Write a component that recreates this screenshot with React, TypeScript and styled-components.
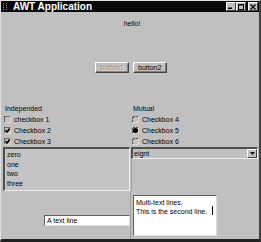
import React from "react";
import styled, { createGlobalStyle } from "styled-components";

const GlobalStyle = createGlobalStyle`
  html, body { margin: 0; padding: 0; background: #c0c0c0; }
  body { font-family: "Liberation Sans", Arial, sans-serif; }
`;

const Frame = styled.div`
  width: 261px;
  height: 242px;
  box-sizing: border-box;
  background: #c0c0c0;
  border-left: 1px solid #e0e0e0;
  border-top: 1px solid #e0e0e0;
  border-right: 2px solid #404040;
  border-bottom: 3px solid #202020;
  display: flex;
  flex-direction: column;
  font-size: 7px;
  color: #000;
  overflow: hidden;
`;

const TitleBar = styled.div`
  height: 11px;
  background: #080808;
  display: flex;
  align-items: center;
  padding: 0 1px 0 2px;
  gap: 4px;
`;

const Title = styled.span`
  color: #fff;
  font-weight: bold;
  font-size: 10px;
  line-height: 11px;
  flex: 1;
`;

const WinButtons = styled.div`
  display: flex;
  align-items: center;
`;

const WinButton = styled.div<{ $gap?: boolean }>`
  width: 10px;
  height: 9px;
  box-sizing: border-box;
  background: #c0c0c0;
  border-top: 1px solid #fff;
  border-left: 1px solid #fff;
  border-right: 1px solid #404040;
  border-bottom: 1px solid #404040;
  margin-left: ${(p) => (p.$gap ? "2px" : "0")};
  display: flex;
  align-items: center;
  justify-content: center;
`;

const Body = styled.div`
  flex: 1;
  display: grid;
  grid-template-columns: 128px 128px;
  grid-template-rows: 34px 57px 44px 44px 1fr;
  padding: 0 0 0 1px;
`;

const HelloRow = styled.div`
  grid-column: 1 / 3;
  text-align: center;
  padding: 8px 0 0 4px;
  line-height: 8px;
`;

const ButtonRow = styled.div`
  grid-column: 1 / 3;
  display: flex;
  justify-content: center;
  align-items: flex-start;
  gap: 4px;
  padding: 16px 0 0 2px;
`;

const Button = styled.div<{ $disabled?: boolean }>`
  height: 11px;
  box-sizing: border-box;
  padding: 0 4px;
  line-height: 9px;
  background: #c0c0c0;
  border-top: 1px solid #fff;
  border-left: 1px solid #fff;
  border-right: 1px solid #404040;
  border-bottom: 1px solid #404040;
  box-shadow: inset -1px -1px 0 #808080;
  color: ${(p) => (p.$disabled ? "#8a8a8a" : "#000")};
  text-shadow: ${(p) => (p.$disabled ? "1px 1px 0 #f4f4f4" : "none")};
  min-width: ${(p) => (p.$disabled ? "31px" : "34px")};
  text-align: center;
`;

const Group = styled.div`
  display: flex;
  flex-direction: column;
  padding-left: 2px;
`;

const GroupLabel = styled.div`
  height: 11px;
  line-height: 11px;
  padding-left: 1px;
`;

const Option = styled.div`
  height: 11px;
  display: flex;
  align-items: center;
  gap: 3px;
  line-height: 11px;
`;

const ListBox = styled.div`
  margin-left: 1px;
  box-sizing: border-box;
  border-top: 2px solid #505050;
  border-left: 2px solid #505050;
  border-right: 1px solid #f0f0f0;
  border-bottom: 1px solid #f0f0f0;
  padding: 1px 0 0 2px;
  background: #c4c4c4;
`;

const ListItem = styled.div`
  height: 9.5px;
  line-height: 9.5px;
`;

const RightCell = styled.div`
  display: flex;
  flex-direction: column;
  padding-left: 1px;
`;

const Choice = styled.div`
  height: 12px;
  box-sizing: border-box;
  border-top: 2px solid #505050;
  border-left: 2px solid #505050;
  border-right: 1px solid #f0f0f0;
  border-bottom: 1px solid #f0f0f0;
  display: flex;
  align-items: center;
  padding-left: 1px;
  line-height: 9px;
`;

const ChoiceText = styled.span`
  flex: 1;
`;

const ArrowButton = styled.div`
  width: 10px;
  height: 9px;
  box-sizing: border-box;
  border-top: 1px solid #fff;
  border-left: 1px solid #fff;
  border-right: 1px solid #404040;
  border-bottom: 1px solid #404040;
  display: flex;
  align-items: center;
  justify-content: center;
`;

const Divider = styled.div`
  flex: 1;
  border-left: 1px solid #a0a0a0;
`;

const FieldCell = styled.div`
  display: flex;
  justify-content: flex-end;
  align-items: flex-start;
  padding-top: 24px;
`;

const TextField = styled.div`
  width: 86px;
  height: 11px;
  box-sizing: border-box;
  background: #fff;
  border-top: 1px solid #606060;
  border-left: 1px solid #606060;
  border-right: 1px solid #e0e0e0;
  border-bottom: 1px solid #e0e0e0;
  padding-left: 2px;
  line-height: 9px;
`;

const AreaCell = styled.div`
  display: flex;
  border-left: 1px solid #a0a0a0;
  padding: 4px 0 0 2px;
`;

const TextArea = styled.div`
  width: 84px;
  height: 41px;
  box-sizing: border-box;
  background: #fff;
  border-top: 1px solid #606060;
  border-left: 1px solid #606060;
  border-right: 1px solid #e0e0e0;
  border-bottom: 1px solid #e0e0e0;
  padding: 2px 0 0 2px;
  line-height: 9px;
  position: relative;
`;

const Caret = styled.span`
  position: absolute;
  left: 78px;
  top: 10px;
  width: 1px;
  height: 9px;
  background: #000;
`;

const CheckIcon = ({ checked }: { checked?: boolean }) => (
  <svg width="7" height="7" viewBox="0 0 7 7">
    <path d="M0 7V0H7" fill="none" stroke="#202020" strokeWidth="1.2" />
    <path d="M7 0V7H0" fill="none" stroke="#f4f4f4" strokeWidth="1" />
    {checked && <path d="M1.5 3.2L3 5L5.8 1.5" fill="none" stroke="#000" strokeWidth="1.6" />}
  </svg>
);

const RadioIcon = ({ checked }: { checked?: boolean }) => (
  <svg width="7" height="7" viewBox="0 0 7 7">
    <path d="M6 1A3 3 0 0 0 1 6" fill="none" stroke="#303030" strokeWidth="1" />
    <path d="M1 6A3 3 0 0 0 6 1" fill="none" stroke="#f4f4f4" strokeWidth="1" />
    {checked && <circle cx="3.5" cy="3.5" r="2.6" fill="#000" />}
  </svg>
);

const checks = [
  { label: "checkbox 1", on: false },
  { label: "Checkbox 2", on: true },
  { label: "Checkbox 3", on: true },
];
const radios = [
  { label: "Checkbox 4", on: false },
  { label: "Checkbox 5", on: true },
  { label: "Checkbox 6", on: false },
];

export default function App() {
  return (
    <>
      <GlobalStyle />
      <Frame>
        <TitleBar>
          <svg width="6" height="7" viewBox="0 0 6 7">
            {[0, 2, 4, 6].map((y) => (
              <React.Fragment key={y}>
                <rect x="0" y={y} width="1" height="1" fill="#909090" />
                <rect x="3" y={y} width="1" height="1" fill="#909090" />
              </React.Fragment>
            ))}
          </svg>
          <Title>AWT Application</Title>
          <WinButtons>
            <WinButton>
              <svg width="6" height="5" viewBox="0 0 6 5">
                <rect x="0" y="3.5" width="4" height="1.5" fill="#000" />
              </svg>
            </WinButton>
            <WinButton>
              <svg width="6" height="6" viewBox="0 0 6 6">
                <rect x="0.5" y="0.5" width="5" height="5" fill="none" stroke="#000" strokeWidth="1" />
                <rect x="0" y="0" width="6" height="1.5" fill="#000" />
              </svg>
            </WinButton>
            <WinButton $gap>
              <svg width="6" height="6" viewBox="0 0 6 6">
                <path d="M0.5 0.5L5.5 5.5M5.5 0.5L0.5 5.5" stroke="#000" strokeWidth="1.4" />
              </svg>
            </WinButton>
          </WinButtons>
        </TitleBar>
        <Body>
          <HelloRow>hello!</HelloRow>
          <ButtonRow>
            <Button $disabled>button1</Button>
            <Button>button2</Button>
          </ButtonRow>
          <Group>
            <GroupLabel>Independed</GroupLabel>
            {checks.map((c) => (
              <Option key={c.label}>
                <CheckIcon checked={c.on} />
                {c.label}
              </Option>
            ))}
          </Group>
          <Group>
            <GroupLabel>Mutual</GroupLabel>
            {radios.map((r) => (
              <Option key={r.label}>
                <RadioIcon checked={r.on} />
                {r.label}
              </Option>
            ))}
          </Group>
          <ListBox>
            {["zero", "one", "two", "three"].map((t) => (
              <ListItem key={t}>{t}</ListItem>
            ))}
          </ListBox>
          <RightCell>
            <Choice>
              <ChoiceText>eignt</ChoiceText>
              <ArrowButton>
                <svg width="5" height="3" viewBox="0 0 5 3">
                  <path d="M0 0H5L2.5 3Z" fill="#000" />
                </svg>
              </ArrowButton>
            </Choice>
            <Divider />
          </RightCell>
          <FieldCell>
            <TextField>A text line</TextField>
          </FieldCell>
          <AreaCell>
            <TextArea>
              Multi-text lines.
              <br />
              This is the second line.
              <Caret />
            </TextArea>
          </AreaCell>
        </Body>
      </Frame>
    </>
  );
}
